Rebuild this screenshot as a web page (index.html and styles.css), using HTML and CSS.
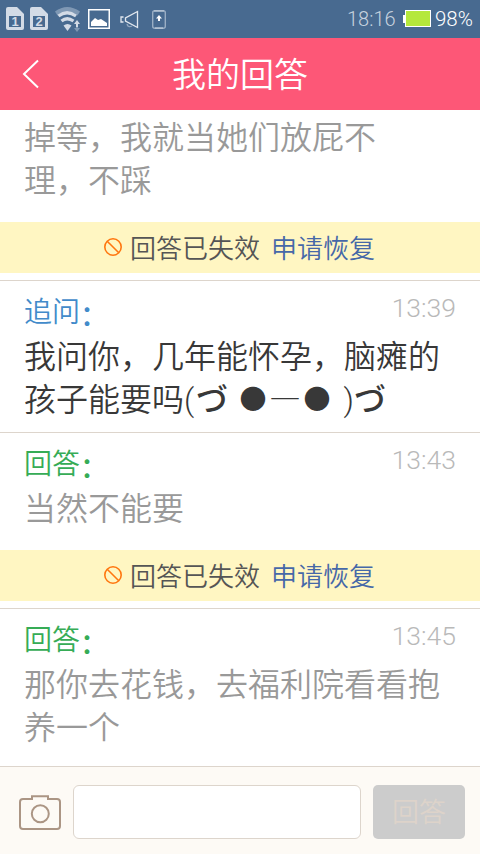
FILE: index.html
```html
<!DOCTYPE html>
<html lang="zh-CN">
<head>
<meta charset="utf-8">
<title>我的回答</title>
<link rel="stylesheet" href="styles.css">
</head>
<body>
<div class="status">
  <svg class="status-icons" width="180" height="38" viewBox="0 0 180 38">
    <g fill="#d3dbe6">
      <path d="M8 7h9l7 7v14q0 2-2 2H8q-2 0-2-2V9q0-2 2-2z"/>
      <path d="M32 7h9l7 7v14q0 2-2 2H32q-2 0-2-2V9q0-2 2-2z"/>
    </g>
    <g fill="#486a90"><rect x="9" y="16" width="12" height="11"/><rect x="33" y="16" width="12" height="11"/></g>
    <g class="sim"><text x="15" y="26">1</text><text x="39" y="26">2</text></g>
    <path d="M55 11.500Q67 2.500 80 11.500l-2.500 4Q67 8 57.500 15.500z" fill="#7f98b4"/>
    <g fill="none" stroke="#d3dbe6" stroke-width="3.200"><path d="M58.500 16Q67 9.500 76 16M61.500 21Q67 16.500 73.500 21"/></g>
    <path d="M63.500 25.500Q67.500 22.500 71.500 25.500L67.500 31z" fill="#d3dbe6"/>
    <path d="M77 20l3 4h-2v3h-2v-3h-2z" fill="#d3dbe6"/>
    <path d="M77 32l3-4h-2v-1h-2v1h-2z" fill="#7f98b4"/>
    <rect x="88.750" y="9.750" width="20.500" height="18.500" fill="none" stroke="#fff" stroke-width="1.500"/>
    <path d="M91 26v-4l4-4 3 2 3-1 3 2 3 2v3z" fill="#fff"/>
    <g fill="none" stroke="#e2e8ef" stroke-width="1.300"><path d="M137.500 11.500v16l-12-6.500v-3zM123.500 17h-2.500v5h2.500"/><path d="M127 24q1 4 5 2" stroke="#91a6be"/></g>
    <rect x="152.700" y="10.700" width="12.600" height="17.600" rx="2" fill="none" stroke="#9aaec4" stroke-width="1.400"/>
    <path d="M154 11h10M155 28h8" stroke="#c8d3df"/>
    <path d="M159 15l3 3.500h-2v2.500h-2v-2.500h-2z" fill="#fff"/>
  </svg>
  <span class="clock">18:16</span>
  <svg class="battery" width="28" height="18" viewBox="0 0 28 18"><path d="M0 5h3v8H0z" fill="#fff"/><rect x="2.500" y=".5" width="25" height="16" fill="#b5e83b" stroke="#fff"/></svg>
  <span class="percent">98%</span>
</div>
<header class="header">
  <svg class="back" width="18" height="30" viewBox="0 0 18 30"><path d="M16 1.500L2 15l14 13.500" fill="none" stroke="#fff" stroke-width="2"/></svg>
  <h1>我的回答</h1>
</header>
<main>
  <section class="entry first">
    <p class="text muted">掉等，我就当她们放屁不<br>理，不踩</p>
    <div class="notice"><svg class="ban" width="18" height="18" viewBox="0 0 18 18"><circle cx="9" cy="9" r="8.200"/><path d="M3.200 3.200l11.600 11.600"/></svg><span>回答已失效</span><a>申请恢复</a></div>
  </section>
  <section class="entry ask">
    <div class="meta"><span class="label blue">追问<span class="colon">：</span></span><time>13:39</time></div>
    <p class="text">我问你，几年能怀孕，脑瘫的<br>孩子能要吗<span class="latin open">(</span><span class="kana">づ</span><span class="latin gap"> </span><span class="dot">●</span>—<span class="dot">●</span><span class="latin close"> )</span><span class="kana">づ</span></p>
  </section>
  <section class="entry reply">
    <div class="meta"><span class="label green">回答<span class="colon">：</span></span><time>13:43</time></div>
    <p class="text muted">当然不能要</p>
    <div class="notice"><svg class="ban" width="18" height="18" viewBox="0 0 18 18"><circle cx="9" cy="9" r="8.200"/><path d="M3.200 3.200l11.600 11.600"/></svg><span>回答已失效</span><a>申请恢复</a></div>
  </section>
  <section class="entry last">
    <div class="meta"><span class="label green">回答<span class="colon">：</span></span><time>13:45</time></div>
    <p class="text muted">那你去花钱，去福利院看看抱<br>养一个</p>
  </section>
</main>
<footer class="composer">
  <svg class="camera" width="42" height="36" viewBox="0 0 42 36"><path d="M4 4h9V1.200h16V4h9q3 0 3 3v24q0 3-3 3H4q-3 0-3-3V7q0-3 3-3z"/><circle cx="21.300" cy="18.700" r="8.500"/></svg>
  <div class="field"></div>
  <div class="send">回答</div>
</footer>
</body>
</html>
```
FILE: styles.css
```css
* { box-sizing: border-box; }
body {
  margin: 0;
  width: 480px;
  height: 854px;
  display: flex;
  flex-direction: column;
  overflow: hidden;
  background: #fff;
  color: #383838;
  font-family: "Noto Sans CJK SC", sans-serif;
  font-weight: 350;
}
h1, p { margin: 0; font-weight: inherit; }
.status {
  height: 38px;
  flex: none;
  display: flex;
  align-items: center;
  background: #486a90;
  font: 300 20.5px/38px Roboto, "Liberation Sans", sans-serif;
}
.sim { font: bold 13px "Liberation Sans", sans-serif; text-anchor: middle; fill: #d3dbe6; }
.clock { margin-left: 167px; width: 56px; font-size: 20px; color: #c6d2df; }
.battery { flex: none; }
.percent { margin-left: 4px; color: #fff; }
.header {
  height: 72px;
  flex: none;
  display: grid;
  grid-template-columns: 40px 1fr 40px;
  align-items: center;
  background: #fd5777;
  color: #fff;
}
.back { margin-left: 22px; }
.header h1 { height: 72px; font-size: 34px; line-height: 70px; text-align: center; }
main { flex: none; }
.entry { border-bottom: 1px solid #ddd5cc; }
.first { height: 171px; padding-top: 4px; }
.ask { height: 152px; }
.reply { height: 176px; }
.last { height: 158px; }
.text { padding-left: 24px; font-size: 32px; line-height: 43px; white-space: nowrap; }
.muted { color: #999; }
.latin {
  display: inline-block;
  font-family: Roboto, "Liberation Sans", sans-serif;
  font-weight: 300;
  line-height: 1;
  white-space: pre;
}
.open { width: 12px; }
.gap { width: 9px; }
.close { width: 21px; text-align: right; }
.kana { font-weight: 500; }
.dot {
  display: inline-block;
  width: 32px;
  font-size: 27px;
  line-height: 1;
  text-align: center;
  vertical-align: 2px;
}
.meta {
  height: 52px;
  padding: 7px 24px 0;
  display: flex;
  justify-content: space-between;
}
.label { font-size: 28px; line-height: 44px; }
.colon { position: relative; top: 4px; font-weight: 500; }
.blue { color: #428bca; }
.green { color: #36ac56; }
time { font: 300 26.5px/40px Roboto, "Liberation Sans", sans-serif; color: #b9b9b9; }
.notice {
  height: 51px;
  display: flex;
  align-items: center;
  padding-left: 104px;
  background: #fff6c2;
  color: #555;
  font-size: 26px;
  line-height: 47px;
}
.notice span, .notice a { margin-bottom: 3px; }
.first .notice { margin-top: 22px; }
.reply .notice { margin-top: 22px; }
.notice a { margin-left: 11px; color: #4668a8; }
.ban { margin: 0 8px 1px 0; fill: none; stroke: #ff7710; stroke-width: 1.6; }
.composer {
  flex: 1;
  display: flex;
  align-items: flex-start;
  padding: 18px 15px 0 19px;
  background: #fdfaf5;
}
.camera { margin-top: 10px; fill: none; stroke: #ab9584; stroke-width: 2; }
.field {
  width: 288px;
  height: 54px;
  margin: 0 12px;
  border: 1px solid #ddd5cc;
  border-radius: 6px;
  background: #fff;
}
.send {
  width: 92px;
  height: 54px;
  border-radius: 5px;
  background: #ccc;
  color: #ddd3ca;
  font-size: 27px;
  line-height: 52px;
  text-align: center;
}
```
